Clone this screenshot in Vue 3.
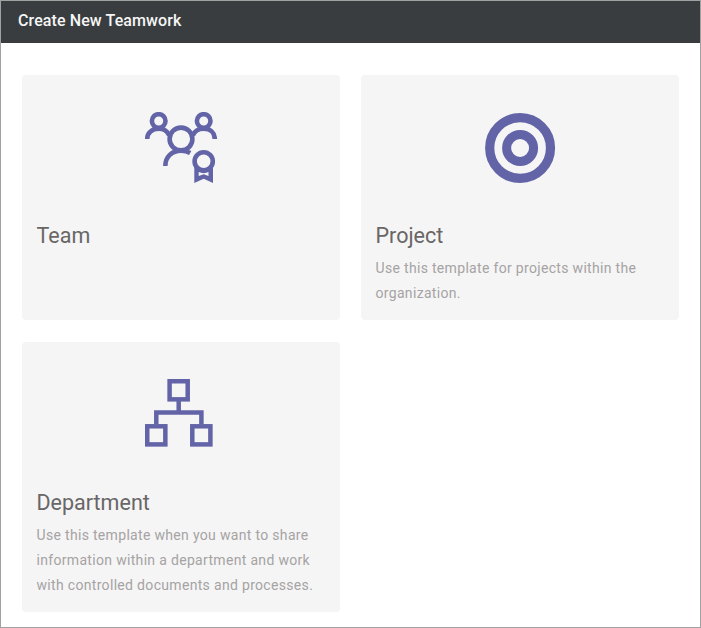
<script setup>
const templates = [
  { id: 'team', title: 'Team', lines: [] },
  {
    id: 'project',
    title: 'Project',
    lines: ['Use this template for projects within the', 'organization.'],
  },
  {
    id: 'department',
    title: 'Department',
    lines: [
      'Use this template when you want to share',
      'information within a department and work',
      'with controlled documents and processes.',
    ],
  },
]
</script>

<template>
  <main class="dialog">
    <header class="bar"><h1>Create New Teamwork</h1></header>
    <section class="grid">
      <article v-for="t in templates" :key="t.id" class="card">
        <svg class="icon" viewBox="0 0 72 72" fill="none" stroke="currentColor">
          <g v-if="t.id === 'team'" stroke-width="4.6">
            <circle cx="13.7" cy="9" r="6.8" />
            <circle cx="58.7" cy="9" r="6.8" />
            <path d="M2.2 27C2.2 20.5 7.3 16.8 13.7 16.8C18.7 16.8 22.5 19.3 24.2 23.4" />
            <path d="M69.8 27C69.8 20.5 65.1 16.8 58.7 16.8C53.7 16.8 49.5 19.3 47.8 23.4" />
            <circle cx="36" cy="27" r="11.4" />
            <path d="M20.3 54C20.3 45 27 38.6 36 38.6C39.5 38.6 42.5 39.3 45.2 40.9" />
            <path
              d="M49.3 54H68V71L58.7 66.7L49.3 71ZM53.7 60V64L58.7 62.3L63.5 64V60L58.7 61.2Z"
              fill="currentColor"
              fill-rule="evenodd"
              stroke="none"
            />
            <circle cx="58.7" cy="49.3" r="9.1" class="medal" />
          </g>
          <g v-else-if="t.id === 'project'">
            <circle cx="36.1" cy="36" r="30.4" stroke-width="9.2" />
            <circle cx="36.1" cy="36" r="13.5" stroke-width="9" />
          </g>
          <g v-else stroke-width="4.5">
            <rect x="24.6" y="2.25" width="18.1" height="18.1" />
            <path d="M33.7 22V33.5M11.3 45V33.5H56.4V45" />
            <rect x="2.25" y="47.3" width="18.1" height="18.1" />
            <rect x="47.3" y="47.3" width="18.1" height="18.1" />
          </g>
        </svg>
        <h2>{{ t.title }}</h2>
        <p>
          <span v-for="line in t.lines" :key="line">{{ line }}</span>
        </p>
      </article>
    </section>
  </main>
</template>

<style>
body {
  background: #fff;
}
</style>

<style scoped>
.dialog {
  box-sizing: border-box;
  width: 701px;
  height: 628px;
  border: 1px solid #a0a1a1;
  background: #fff;
  font-family: Roboto, 'Liberation Sans', sans-serif;
  overflow: hidden;
}
.bar {
  display: flex;
  align-items: center;
  box-sizing: border-box;
  height: 42px;
  padding: 0 17px 2px;
  background: #393d40;
}
h1 {
  margin: 0;
  color: #f6f6f6;
  font-size: 16px;
  font-weight: 500;
  line-height: 24px;
  letter-spacing: 0.1px;
}
.grid {
  display: grid;
  grid-template-columns: 318px 318px;
  grid-template-rows: 245px 270px;
  gap: 22px 21px;
  padding: 32px 21px 0;
}
.card {
  display: flex;
  flex-direction: column;
  box-sizing: border-box;
  padding: 37px 14px 0 14.5px;
  border-radius: 4px;
  background: #f5f5f5;
}
.icon {
  flex: none;
  align-self: center;
  width: 72px;
  height: 72px;
  margin-left: -0.5px;
  color: #6264a7;
}
.medal {
  fill: #f5f5f5;
}
h2 {
  margin: 37px 0 0;
  color: #686666;
  font-size: 21.5px;
  font-weight: 400;
  line-height: 30px;
}
p {
  margin: 5px 0 0;
  color: #a5a3a3;
  font-size: 14px;
  line-height: 25px;
  letter-spacing: 0.32px;
}
p span {
  display: block;
  white-space: nowrap;
}
</style>
